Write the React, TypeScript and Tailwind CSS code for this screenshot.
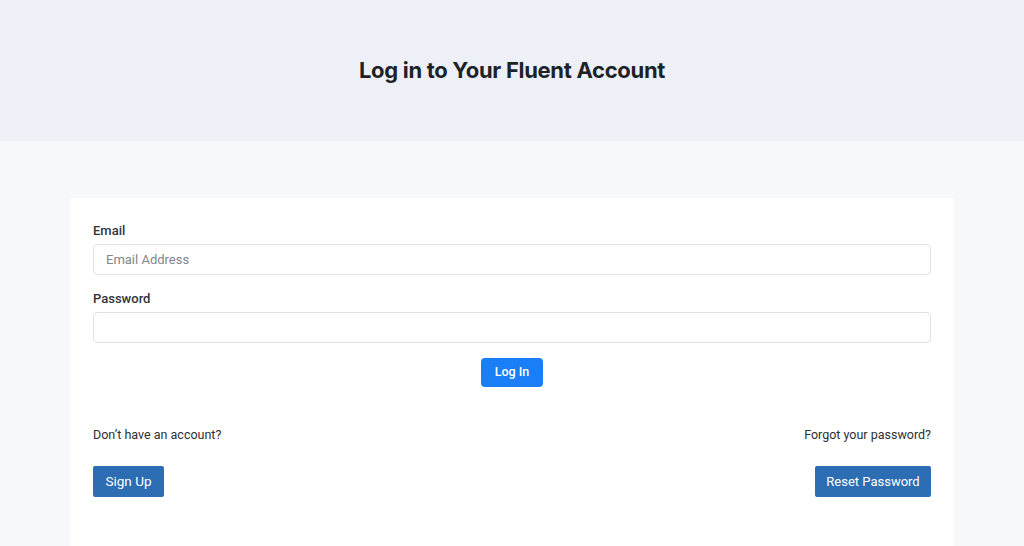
import React from "react";

export default function App() {
  return (
    <div className="min-h-[546px] bg-[#f6f8fc] text-[#2b3035]" style={{ fontFamily: "Roboto, 'Liberation Sans', sans-serif" }}>
      <header className="h-[141px] bg-[#edf1f7] flex items-center justify-center">
        <h1 className="text-[22px] font-bold text-[#1e2227] tracking-[-0.3px]" style={{ fontFamily: "Inter, sans-serif" }}>Log in to Your Fluent Account</h1>
      </header>
      <main className="px-[70px] pt-[57px]">
        <div className="bg-white rounded-[3px] px-[23px] pt-[24px] pb-[60px]">
          <label className="block text-[13px] leading-[18px] font-medium text-[#2f343a]">Email</label>
          <input
            type="email"
            placeholder="Email Address"
            className="mt-1 block w-full h-[31px] rounded-[4px] border border-[#dfe2e6] px-3 text-[13px] text-[#2b3035] placeholder:text-[#80868c] outline-none"
          />
          <label className="mt-[15px] block text-[13px] leading-[18px] font-medium text-[#2f343a]">Password</label>
          <input
            type="password"
            className="mt-1 block w-full h-[31px] rounded-[4px] border border-[#dfe2e6] px-3 text-[13px] outline-none"
          />
          <div className="mt-[15px] flex justify-center">
            <button className="h-[29px] w-[62px] rounded-[4px] bg-[#1a7ff6] text-white text-[12.5px] font-medium">Log In</button>
          </div>
          <div className="mt-[39px] flex justify-between text-[12.5px] leading-[18px] text-[#2b3035]">
            <span>Don’t have an account?</span>
            <span>Forgot your password?</span>
          </div>
          <div className="mt-[22px] flex justify-between">
            <button className="h-[31px] w-[71px] rounded-[2px] bg-[#2c6db3] text-white text-[13.5px]">Sign Up</button>
            <button className="h-[31px] w-[116px] rounded-[2px] bg-[#2c6db3] text-white text-[13px]">Reset Password</button>
          </div>
        </div>
      </main>
    </div>
  );
}
